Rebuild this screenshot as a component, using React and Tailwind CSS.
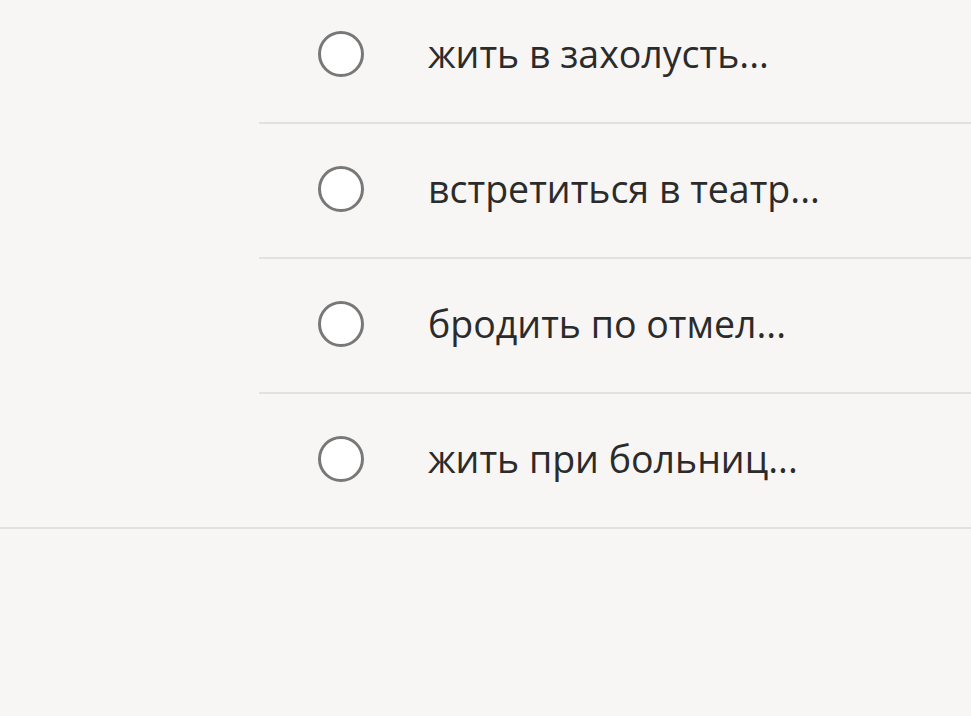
export default function App() {
  const items = [
    "жить в захолусть...",
    "встретиться в театр...",
    "бродить по отмел...",
    "жить при больниц...",
  ];
  return (
    <div className="w-[971px] h-[716px] overflow-hidden bg-[#f7f6f5]" style={{ fontFamily: '"Open Sans", "Noto Sans", sans-serif' }}>
      <div className="-mt-[11px] border-b-2 border-[#e2e1e0]">
        <div className="pl-[259px]">
          {items.map((t, i) => (
            <div
              key={i}
              className={`flex items-center pl-[59px] pb-[4px] ${i < items.length - 1 ? "h-[135px] border-b-2 border-[#e2e1e0]" : "h-[133px]"}`}
            >
              <div className="w-[46px] h-[46px] rounded-full border-[3px] border-[#787878] bg-white shrink-0" />
              <div className="ml-[64px] text-[37.5px] text-[#2b2b2b] leading-none whitespace-nowrap">{t}</div>
            </div>
          ))}
        </div>
      </div>
    </div>
  );
}
